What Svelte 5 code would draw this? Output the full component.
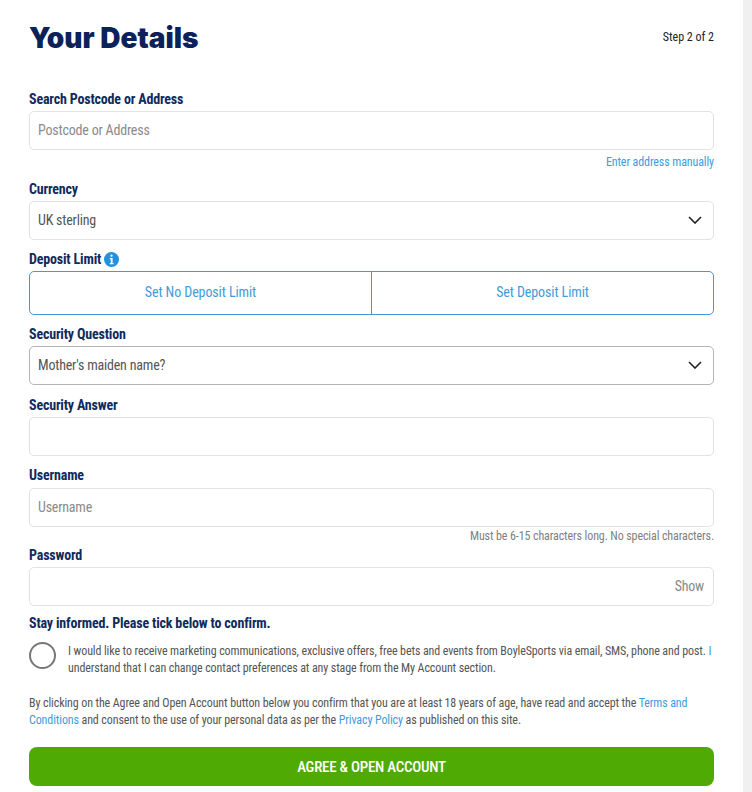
<script>
  const chevron = 'M1 1l6 6 6-6';
</script>

<div class="page">
  <main class="form">
    <header class="head">
      <h1>Your Details</h1>
      <span class="step">Step 2 of 2</span>
    </header>

    <div class="field postcode">
      <div class="label">Search Postcode or Address</div>
      <div class="box placeholder">Postcode or Address</div>
      <div class="note link">Enter address manually</div>
    </div>

    <div class="field currency">
      <div class="label">Currency</div>
      <div class="box select">
        <span>UK sterling</span>
        <svg width="14" height="8" viewBox="0 0 14 8"><path d={chevron} /></svg>
      </div>
    </div>

    <div class="field deposit">
      <div class="label">
        Deposit Limit
        <svg class="info" width="15" height="15" viewBox="0 0 15 15">
          <circle cx="7.5" cy="7.5" r="7.5" fill="#2590d8" />
          <rect x="6.4" y="2.6" width="2.2" height="2.2" rx="1" fill="#fff" />
          <path d="M5.8 6h2.8v5h1v1.2H5.8V11h1V7.2h-1z" fill="#fff" />
        </svg>
      </div>
      <div class="tabs">
        <div class="tab">Set No Deposit Limit</div>
        <div class="tab">Set Deposit Limit</div>
      </div>
    </div>

    <div class="field question">
      <div class="label">Security Question</div>
      <div class="box select dark">
        <span>Mother's maiden name?</span>
        <svg width="14" height="8" viewBox="0 0 14 8"><path d={chevron} /></svg>
      </div>
    </div>

    <div class="field answer">
      <div class="label">Security Answer</div>
      <div class="box"></div>
    </div>

    <div class="field username">
      <div class="label">Username</div>
      <div class="box placeholder">Username</div>
      <div class="note hint">Must be 6-15 characters long. No special characters.</div>
    </div>

    <div class="field password">
      <div class="label">Password</div>
      <div class="box show"><span>Show</span></div>
    </div>

    <div class="consent">
      <div class="label">Stay informed. Please tick below to confirm.</div>
      <div class="tick">
        <span class="circle"></span>
        <p>I would like to receive marketing communications, exclusive offers, free bets and events from BoyleSports via email, SMS, phone and post. <a href="#top">I</a> understand that I can change contact preferences at any stage from the My Account section.</p>
      </div>
    </div>

    <p class="terms">By clicking on the Agree and Open Account button below you confirm that you are at least 18 years of age, have read and accept the <a href="#top">Terms and Conditions</a> and consent to the use of your personal data as per the <a href="#top">Privacy Policy</a> as published on this site.</p>

    <button type="button" class="submit">AGREE &amp; OPEN ACCOUNT</button>
  </main>
  <div class="gutter"></div>
</div>

<style>
  :global(body) {
    margin: 0;
    background: #fff;
  }

  .page {
    display: flex;
    width: 752px;
    height: 792px;
    overflow: hidden;
    font-family: Roboto, "Liberation Sans", sans-serif;
    font-stretch: 75%;
    color: #4a4a4a;
  }

  .form {
    width: 685px;
    padding: 0 29px;
    flex: none;
  }

  .gutter {
    width: 9px;
    flex: none;
    background: #f0f0f0;
  }

  .head {
    display: flex;
    justify-content: space-between;
    align-items: center;
    height: 74px;
  }

  h1 {
    margin: 2px 0 0;
    font-family: Inter, sans-serif;
    font-stretch: normal;
    font-weight: 900;
    font-size: 28px;
    line-height: 36px;
    color: #0a2259;
  }

  .step {
    font-size: 12px;
    color: #222;
  }

  .label {
    display: flex;
    align-items: center;
    gap: 3px;
    height: 16px;
    font-size: 14px;
    font-weight: 700;
    letter-spacing: -0.17px;
    color: #0f2a5c;
  }

  .box {
    box-sizing: border-box;
    height: 39px;
    margin-top: 4px;
    padding: 0 8px 1px;
    display: flex;
    align-items: center;
    background: #fff;
    border: 1px solid #e2e2e2;
    border-radius: 5px;
    font-size: 14px;
    letter-spacing: -0.2px;
    color: #555;
  }

  .placeholder {
    color: #8a8a8a;
  }

  .select {
    justify-content: space-between;
    padding-right: 11px;
  }

  .select svg path {
    fill: none;
    stroke: #222;
    stroke-width: 1.6;
  }

  .dark {
    border-color: #b5b5b5;
  }

  .show {
    justify-content: flex-end;
    padding-right: 9px;
    color: #8a8a8a;
  }

  .note {
    height: 15px;
    line-height: 15px;
    font-size: 12px;
    letter-spacing: -0.11px;
    text-align: right;
  }

  .link {
    margin-top: 5px;
    color: #3f9bdc;
  }

  .hint {
    margin-top: 2px;
    color: #808080;
  }

  .postcode { margin-top: 17px; }
  .currency { margin-top: 11px; }
  .deposit { margin-top: 11px; }
  .question { margin-top: 11px; }
  .answer { margin-top: 12px; }
  .username { margin-top: 11px; }
  .password { margin-top: 3px; }
  .username .box { margin-top: 5px; }

  .tabs {
    display: flex;
    box-sizing: border-box;
    height: 44px;
    margin-top: 4px;
    border: 1px solid #3f9bdc;
    border-radius: 5px;
  }

  .tab {
    flex: 1;
    display: flex;
    align-items: center;
    justify-content: center;
    padding-bottom: 2px;
    font-size: 14px;
    letter-spacing: -0.1px;
    color: #3f9bdc;
  }

  .tab + .tab {
    border-left: 1px solid #3f9bdc;
  }

  .consent {
    margin-top: 9px;
  }

  .tick {
    display: flex;
    align-items: flex-start;
    gap: 12px;
    margin-top: 10px;
  }

  .circle {
    box-sizing: border-box;
    flex: none;
    width: 27px;
    height: 27px;
    margin-top: 1px;
    border: 2px solid #777;
    border-radius: 50%;
  }

  .tick p,
  .terms {
    margin: 0;
    font-size: 12px;
    line-height: 16.5px;
    letter-spacing: -0.11px;
    color: #555;
  }

  .tick p {
    margin-top: 2px;
  }

  a {
    color: #3f9bdc;
    text-decoration: none;
  }

  .terms {
    margin-top: 19px;
  }

  .submit {
    display: block;
    width: 100%;
    height: 39px;
    margin-top: 19px;
    padding: 0;
    border: 0;
    border-radius: 8px;
    background: #4fab04;
    color: #fff;
    font-family: inherit;
    font-stretch: inherit;
    font-size: 15px;
    font-weight: 500;
    letter-spacing: -0.25px;
  }
</style>
